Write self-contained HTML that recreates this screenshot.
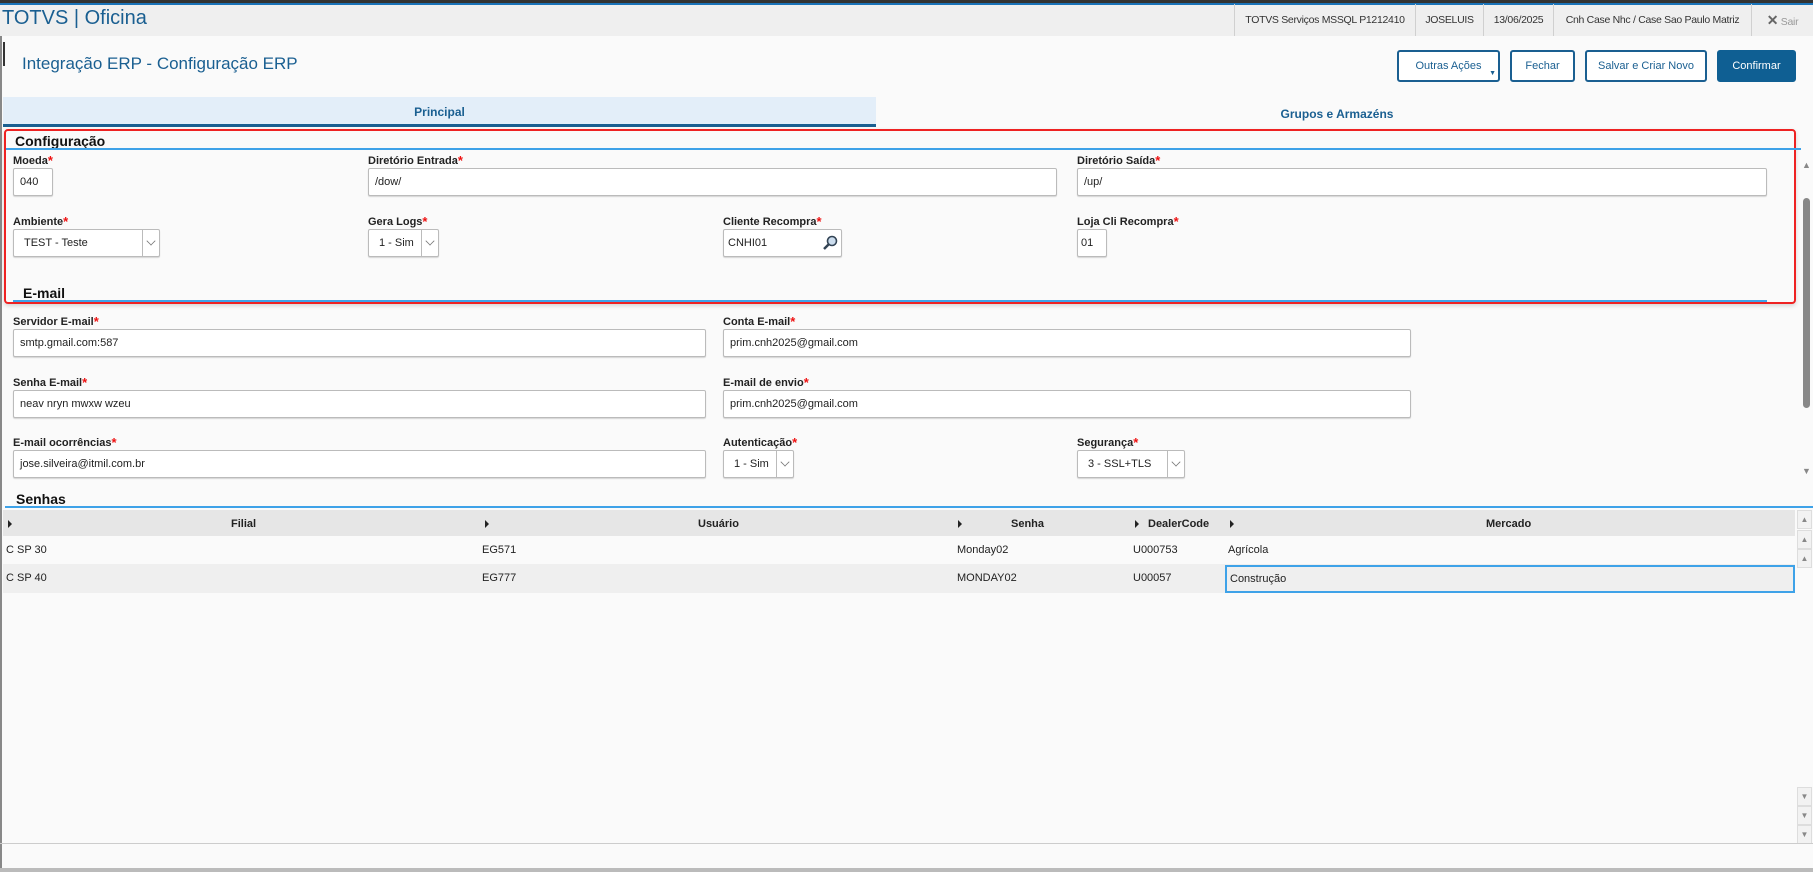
<!DOCTYPE html>
<html><head><meta charset="utf-8"><style>
*{box-sizing:border-box;margin:0;padding:0}
body{width:1813px;height:872px;overflow:hidden;background:#fafafa;font-family:"Liberation Sans",Arial,sans-serif;font-size:11px;color:#222;position:relative}
.a{position:absolute;white-space:nowrap}
.top{left:0;top:0;width:1813px;height:36px;background:#efefef;border-top:3px solid #333}
.top:before{content:"";position:absolute;left:0;top:0;right:0;height:2px;background:#1a73b8}
.seg{top:4px;height:32px;border-left:1px solid #d0d0d0;line-height:32px;font-size:10.5px;letter-spacing:-0.3px;color:#333;text-align:center}
.lbl{font-weight:bold;font-size:11px;color:#222;line-height:12px}
.lbl i{color:#e11;font-style:normal;font-size:13px;position:relative;top:1px}
.inp{background:#fff;border:1px solid #bbb;border-radius:2px;height:28px;line-height:26px;padding-left:6px;font-size:11px;box-shadow:0 1px 1px rgba(0,0,0,.15)}
.sel:after{content:"";position:absolute;right:0;top:0;bottom:0;width:16px;border-left:1px solid #bbb}
.chev{position:absolute;right:4px;top:7px;width:8px;height:8px;border-right:1.5px solid #777;border-bottom:1.5px solid #777;transform:rotate(45deg) scale(.8)}
.btn{top:50px;height:32px;border:2px solid #1a5f91;border-radius:3px;color:#1a5f91;font-size:11px;text-align:center;line-height:28px;background:#fff}
.h{font-weight:bold;font-size:14px;color:#111}
.bl{height:2px;background:#3ea2e8}
.cell{font-size:11px;line-height:28px}
.tri{display:inline-block;width:0;height:0;border-left:4px solid #222;border-top:4px solid transparent;border-bottom:4px solid transparent}
.sb{left:1797px;width:15px;height:19px;background:#f2f2f2;border:1px solid #ddd;color:#888;font-size:8px;text-align:center;line-height:17px}
</style></head><body>
<div class="a top"></div>
<div class="a" style="left:2px;top:5px;font-size:20px;color:#1a5f91;line-height:26px">TOTVS | Oficina</div>
<div class="a seg" style="left:1234px;width:181px">TOTVS Serviços MSSQL P1212410</div>
<div class="a seg" style="left:1415px;width:68px">JOSELUIS</div>
<div class="a seg" style="left:1483px;width:70px">13/06/2025</div>
<div class="a seg" style="left:1553px;width:198px">Cnh Case Nhc / Case Sao Paulo Matriz</div>
<div class="a seg" style="left:1751px;width:62px;color:#999"><b style="color:#666;font-size:14px">✕</b> Sair</div>
<div class="a" style="left:3px;top:42px;width:2px;height:24px;background:#333"></div>
<div class="a" style="left:22px;top:54px;font-size:17px;color:#1a5f91">Integração ERP - Configuração ERP</div>
<div class="a btn" style="left:1397px;width:103px">Outras Ações<span style="position:absolute;right:2px;top:8px;font-size:7px">▼</span></div>
<div class="a btn" style="left:1510px;width:65px">Fechar</div>
<div class="a btn" style="left:1585px;width:122px">Salvar e Criar Novo</div>
<div class="a btn" style="left:1717px;width:79px;background:#0f5f93;border-color:#0f5f93;color:#fff">Confirmar</div>
<div class="a" style="left:3px;top:97px;width:873px;height:30px;background:#e3eef9;border-bottom:3px solid #1a5f91;text-align:center;line-height:30px;font-weight:bold;font-size:12px;color:#1a5f91">Principal</div>
<div class="a" style="left:876px;top:97px;width:922px;height:30px;text-align:center;line-height:34px;font-weight:bold;font-size:12px;color:#1a5f91">Grupos e Armazéns</div>
<div class="a" style="left:0;top:36px;width:2px;height:836px;background:#888"></div>
<div class="a" style="left:1802px;top:160px;color:#888;font-size:9px">▲</div>
<div class="a" style="left:1803px;top:198px;width:7px;height:210px;background:#888;border-radius:4px"></div>
<div class="a" style="left:1802px;top:466px;color:#888;font-size:9px">▼</div>
<div class="a" style="left:4px;top:129px;width:1792px;height:175px;border:2px solid #e22;border-radius:4px;box-shadow:0 2px 4px rgba(0,0,0,.15)"></div>
<div class="a h" style="left:15px;top:133px">Configuração</div>
<div class="a bl" style="left:6px;top:148px;width:1795px"></div>
<div class="a lbl" style="left:13px;top:154px">Moeda<i>*</i></div>
<div class="a inp" style="left:13px;top:168px;width:40px">040</div>
<div class="a lbl" style="left:368px;top:154px">Diretório Entrada<i>*</i></div>
<div class="a inp" style="left:368px;top:168px;width:689px">/dow/</div>
<div class="a lbl" style="left:1077px;top:154px">Diretório Saída<i>*</i></div>
<div class="a inp" style="left:1077px;top:168px;width:690px">/up/</div>
<div class="a lbl" style="left:13px;top:215px">Ambiente<i>*</i></div>
<div class="a inp sel" style="left:13px;top:229px;width:147px;padding-left:10px">TEST - Teste<span class="chev"></span></div>
<div class="a lbl" style="left:368px;top:215px">Gera Logs<i>*</i></div>
<div class="a inp sel" style="left:368px;top:229px;width:71px;padding-left:10px">1 - Sim<span class="chev"></span></div>
<div class="a lbl" style="left:723px;top:215px">Cliente Recompra<i>*</i></div>
<div class="a inp" style="left:723px;top:229px;width:119px;padding-left:4px">CNHI01<svg style="position:absolute;right:3px;top:5px" width="16" height="16" viewBox="0 0 16 16"><circle cx="10" cy="6" r="4.5" fill="#cde" stroke="#345" stroke-width="1.6"/><path d="M7 9L2 14" stroke="#345" stroke-width="2.5"/></svg></div>
<div class="a lbl" style="left:1077px;top:215px">Loja Cli Recompra<i>*</i></div>
<div class="a inp" style="left:1077px;top:229px;width:30px;padding-left:3px">01</div>
<div class="a h" style="left:23px;top:285px">E-mail</div>
<div class="a bl" style="left:13px;top:300px;width:1754px"></div>
<div class="a lbl" style="left:13px;top:315px">Servidor E-mail<i>*</i></div>
<div class="a inp" style="left:13px;top:329px;width:693px">smtp.gmail.com:587</div>
<div class="a lbl" style="left:723px;top:315px">Conta E-mail<i>*</i></div>
<div class="a inp" style="left:723px;top:329px;width:688px">prim.cnh2025@gmail.com</div>
<div class="a lbl" style="left:13px;top:376px">Senha E-mail<i>*</i></div>
<div class="a inp" style="left:13px;top:390px;width:693px">neav nryn mwxw wzeu</div>
<div class="a lbl" style="left:723px;top:376px">E-mail de envio<i>*</i></div>
<div class="a inp" style="left:723px;top:390px;width:688px">prim.cnh2025@gmail.com</div>
<div class="a lbl" style="left:13px;top:436px">E-mail ocorrências<i>*</i></div>
<div class="a inp" style="left:13px;top:450px;width:693px">jose.silveira@itmil.com.br</div>
<div class="a lbl" style="left:723px;top:436px">Autenticação<i>*</i></div>
<div class="a inp sel" style="left:723px;top:450px;width:71px;padding-left:10px">1 - Sim<span class="chev"></span></div>
<div class="a lbl" style="left:1077px;top:436px">Segurança<i>*</i></div>
<div class="a inp sel" style="left:1077px;top:450px;width:108px;padding-left:10px">3 - SSL+TLS<span class="chev"></span></div>
<div class="a h" style="left:16px;top:491px">Senhas</div>
<div class="a bl" style="left:5px;top:506px;width:1808px"></div>
<div class="a" style="left:3px;top:510px;width:1792px;height:26px;background:#e6e6e6"></div>
<div class="a" style="left:3px;top:564px;width:1792px;height:29px;background:#efefef"></div>
<div class="a" style="left:8px;top:519px"><span class="tri"></span></div>
<div class="a" style="left:485px;top:519px"><span class="tri"></span></div>
<div class="a" style="left:958px;top:519px"><span class="tri"></span></div>
<div class="a" style="left:1135px;top:519px"><span class="tri"></span></div>
<div class="a" style="left:1230px;top:519px"><span class="tri"></span></div>
<div class="a lbl" style="left:231px;top:518px">Filial</div>
<div class="a lbl" style="left:698px;top:518px">Usuário</div>
<div class="a lbl" style="left:1011px;top:518px">Senha</div>
<div class="a lbl" style="left:1148px;top:518px">DealerCode</div>
<div class="a lbl" style="left:1486px;top:518px">Mercado</div>
<div class="a cell" style="left:6px;top:536px">C SP 30</div>
<div class="a cell" style="left:482px;top:536px">EG571</div>
<div class="a cell" style="left:957px;top:536px">Monday02</div>
<div class="a cell" style="left:1133px;top:536px">U000753</div>
<div class="a cell" style="left:1228px;top:536px">Agrícola</div>
<div class="a cell" style="left:6px;top:564px">C SP 40</div>
<div class="a cell" style="left:482px;top:564px">EG777</div>
<div class="a cell" style="left:957px;top:564px">MONDAY02</div>
<div class="a cell" style="left:1133px;top:564px">U00057</div>
<div class="a cell" style="left:1225px;top:565px;width:570px;height:28px;border:2px solid #3ea2e8;line-height:24px;padding-left:3px">Construção</div>
<div class="a sb" style="top:510px">▲</div>
<div class="a sb" style="top:530px">▲</div>
<div class="a sb" style="top:549px">▲</div>
<div class="a sb" style="top:787px">▼</div>
<div class="a sb" style="top:806px">▼</div>
<div class="a sb" style="top:825px">▼</div>
<div class="a" style="left:0;top:843px;width:1813px;height:1px;background:#ccc"></div>
<div class="a" style="left:0;top:868px;width:1813px;height:4px;background:#bbb"></div>
</body></html>
